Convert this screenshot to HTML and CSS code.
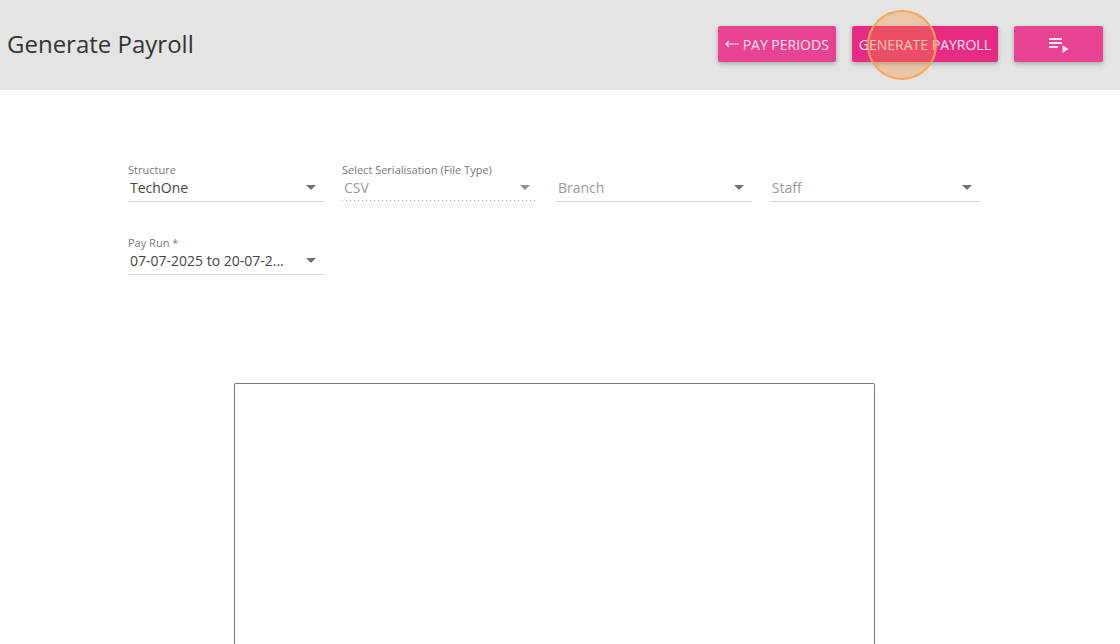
FILE: index.html
```html
<!DOCTYPE html>
<html lang="en">
<head>
    <meta charset="UTF-8">
    <meta name="viewport" content="width=device-width, initial-scale=1.0">
    <title>Generate Payroll</title>
    <link rel="stylesheet" href="styles.css">
</head>
<body>
    <header class="toolbar">
        <h1>Generate Payroll</h1>
        <div class="actions">
            <button type="button" class="button">
                <svg width="14" height="8" viewBox="0 0 14 8" fill="none" stroke="currentColor" stroke-width="1.2">
                    <path d="M14 4H1M4 1L1 4l3 3"/>
                </svg>
                Pay Periods
            </button>
            <button type="button" class="button active">Generate Payroll<span class="click-marker"></span></button>
            <button type="button" class="button button-icon" aria-label="Run list">
                <svg width="20" height="18" viewBox="0 0 20 18" fill="currentColor">
                    <path d="M0 3h13v2H0zM0 7h13v2H0zM0 11h9v2H0zM13.500 10l6 4-6 4z"/>
                </svg>
            </button>
        </div>
    </header>

    <main>
        <form class="filters">
            <div class="field">
                <label for="structure">Structure</label>
                <select id="structure">
                    <option>TechOne</option>
                </select>
            </div>
            <div class="field">
                <label for="file-type">Select Serialisation (File Type)</label>
                <select id="file-type" disabled>
                    <option>CSV</option>
                </select>
            </div>
            <div class="field">
                <select id="branch" class="empty" aria-label="Branch">
                    <option>Branch</option>
                </select>
            </div>
            <div class="field">
                <select id="staff" class="empty" aria-label="Staff">
                    <option>Staff</option>
                </select>
            </div>
            <div class="field">
                <label for="pay-run">Pay Run *</label>
                <select id="pay-run">
                    <option>07-07-2025 to 20-07-2...</option>
                </select>
            </div>
        </form>

        <textarea class="output" aria-label="Payroll output" readonly></textarea>
    </main>
</body>
</html>
```

FILE: styles.css
```css
* {
    box-sizing: border-box;
}
body {
    margin: 0;
    font-family: "Open Sans", sans-serif;
    font-size: 14px;
    color: #444;
    background: #fff;
}
.toolbar {
    display: flex;
    align-items: center;
    justify-content: space-between;
    height: 90px;
    padding: 0 17px 2px 7px;
    background: #e4e4e4;
}
h1 {
    margin: 0;
    padding-bottom: 2px;
    font-size: 24px;
    font-weight: 400;
    color: #333;
}
.actions {
    display: flex;
    gap: 16px;
}
.button {
    position: relative;
    display: flex;
    align-items: center;
    justify-content: center;
    gap: 4px;
    height: 36px;
    padding: 0 7px;
    border: 0;
    border-radius: 2px;
    background: #e84393;
    color: #fde3f0;
    font-family: inherit;
    font-size: 14px;
    text-transform: uppercase;
    white-space: nowrap;
    box-shadow: 0 2px 5px rgba(0, 0, 0, 0.26);
    cursor: pointer;
}
.button.active {
    background: #e62b84;
}
.button-icon {
    min-width: 89px;
}
.click-marker {
    position: absolute;
    top: -16px;
    left: 15px;
    width: 70px;
    height: 70px;
    border: 2px solid #faa55c;
    border-radius: 50%;
    background: rgba(250, 140, 50, 0.35);
    pointer-events: none;
}
main {
    padding: 72px 140px 0 128px;
}
.filters {
    display: grid;
    grid-template-columns: repeat(3, 23%) 1fr;
    gap: 33px 18px;
}
.field {
    display: flex;
    flex-direction: column;
    justify-content: flex-end;
    height: 40px;
}
label {
    font-size: 11px;
    line-height: 16px;
    color: #777;
}
select {
    width: 100%;
    height: 24px;
    padding: 0 32px 4px 2px;
    border: 0;
    border-bottom: 1px solid #d8d8d8;
    border-radius: 0;
    appearance: none;
    background: url("data:image/svg+xml,%3Csvg xmlns='http://www.w3.org/2000/svg' viewBox='0 0 10 5'%3E%3Cpath d='M0 0h10L5 5z' fill='%23707070'/%3E%3C/svg%3E") no-repeat right 8px top 7px / 10px 5px;
    color: #444;
    font-family: inherit;
    font-size: 14px;
    text-overflow: ellipsis;
}
select:disabled {
    border-bottom-color: transparent;
    background-image:
        url("data:image/svg+xml,%3Csvg xmlns='http://www.w3.org/2000/svg' viewBox='0 0 10 5'%3E%3Cpath d='M0 0h10L5 5z' fill='%23909090'/%3E%3C/svg%3E"),
        linear-gradient(to right, #aaa 1px, transparent 1px);
    background-repeat: no-repeat, repeat-x;
    background-position: right 8px top 7px, left bottom;
    background-size: 10px 5px, 4px 1px;
    color: #999;
    opacity: 1;
}
select.empty {
    padding-bottom: 6px;
    color: #999;
}
.output {
    display: block;
    width: 100%;
    max-width: 641px;
    height: 320px;
    margin: 108px auto 0;
    border: 1px solid #777;
    border-radius: 2px;
    resize: none;
}
```
